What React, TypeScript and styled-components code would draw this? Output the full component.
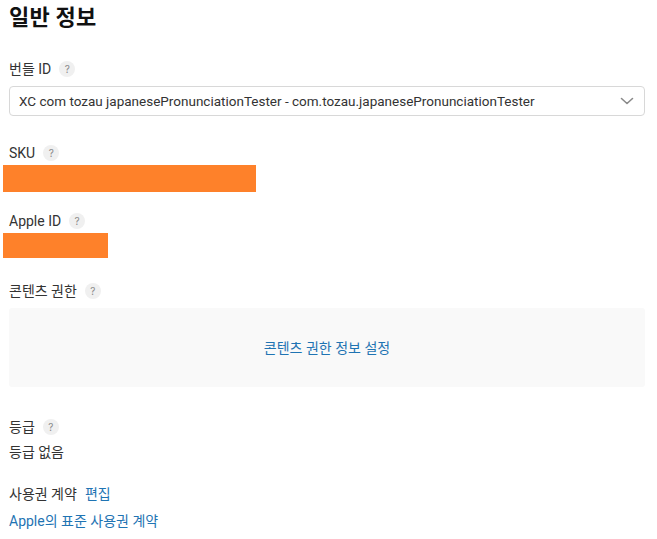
import React from "react";
import styled, { createGlobalStyle } from "styled-components";

const Global = createGlobalStyle`
  html, body { margin: 0; padding: 0; background: #fff; }
  body {
    font-family: "Roboto", "Noto Sans CJK KR", sans-serif;
    color: #333;
    -webkit-font-smoothing: antialiased;
  }
`;

const Page = styled.div`
  padding: 4px 12px 0 9px;
  display: flex;
  flex-direction: column;
`;

const Title = styled.h1`
  margin: 0;
  font-size: 22px;
  line-height: 28px;
  font-weight: 700;
  color: #111;
  letter-spacing: 0.2px;
`;

const Field = styled.div<{ $top: number }>`
  display: flex;
  flex-direction: column;
  margin-top: ${(p) => p.$top}px;
`;

const Label = styled.div`
  display: flex;
  align-items: center;
  gap: 8px;
  font-size: 14px;
  line-height: 20px;
  color: #333;
`;

const Help = styled.span`
  width: 16px;
  height: 16px;
  border-radius: 50%;
  background: #f0f0f0;
  color: #8a8a8a;
  font-size: 10px;
  line-height: 16px;
  text-align: center;
  font-family: "Inter", sans-serif;
`;

const Select = styled.div`
  margin-top: 7px;
  height: 30px;
  box-sizing: border-box;
  border: 1px solid #d8d8d8;
  border-radius: 4px;
  display: flex;
  align-items: center;
  justify-content: space-between;
  padding: 0 10px 0 9px;
  font-size: 13.5px;
  color: #333;
`;

const Redact = styled.div<{ $w: number; $h: number }>`
  margin-top: 2px;
  margin-left: -6px;
  width: ${(p) => p.$w}px;
  height: ${(p) => p.$h}px;
  background: #fe812a;
`;

const RightsBox = styled.div`
  margin-top: 7px;
  height: 79px;
  background: #f9f9f9;
  border-radius: 3px;
  display: flex;
  align-items: center;
  justify-content: center;
`;

const Link = styled.a`
  color: #1f74b3;
  font-size: 14px;
  line-height: 20px;
  text-decoration: none;
  cursor: pointer;
`;

const Value = styled.div<{ $top: number }>`
  margin-top: ${(p) => p.$top}px;
  font-size: 14px;
  line-height: 20px;
  color: #333;
`;

const Chevron = () => (
  <svg width="14" height="14" viewBox="0 0 14 14" fill="none">
    <path d="M1.5 4.5 L7 9.5 L12.5 4.5" stroke="#8a8a8a" strokeWidth="1.6" strokeLinecap="round" strokeLinejoin="round" />
  </svg>
);

export default function App() {
  return (
    <>
      <Global />
      <Page>
        <Title>일반 정보</Title>

        <Field $top={27}>
          <Label>
            번들 ID <Help>?</Help>
          </Label>
          <Select>
            <span>XC com tozau japanesePronunciationTester - com.tozau.japanesePronunciationTester</span>
            <Chevron />
          </Select>
        </Field>

        <Field $top={27}>
          <Label>
            SKU <Help>?</Help>
          </Label>
          <Redact $w={253} $h={27} />
        </Field>

        <Field $top={19}>
          <Label>
            Apple ID <Help>?</Help>
          </Label>
          <Redact $w={105} $h={25} />
        </Field>

        <Field $top={23}>
          <Label>
            콘텐츠 권한 <Help>?</Help>
          </Label>
          <RightsBox>
            <Link>콘텐츠 권한 정보 설정</Link>
          </RightsBox>
        </Field>

        <Field $top={30}>
          <Label>
            등급 <Help>?</Help>
          </Label>
          <Value $top={5}>등급 없음</Value>
        </Field>

        <Field $top={22}>
          <Label>
            사용권 계약 <Link>편집</Link>
          </Label>
          <Value $top={7}>
            <Link>Apple의 표준 사용권 계약</Link>
          </Value>
        </Field>
      </Page>
    </>
  );
}
